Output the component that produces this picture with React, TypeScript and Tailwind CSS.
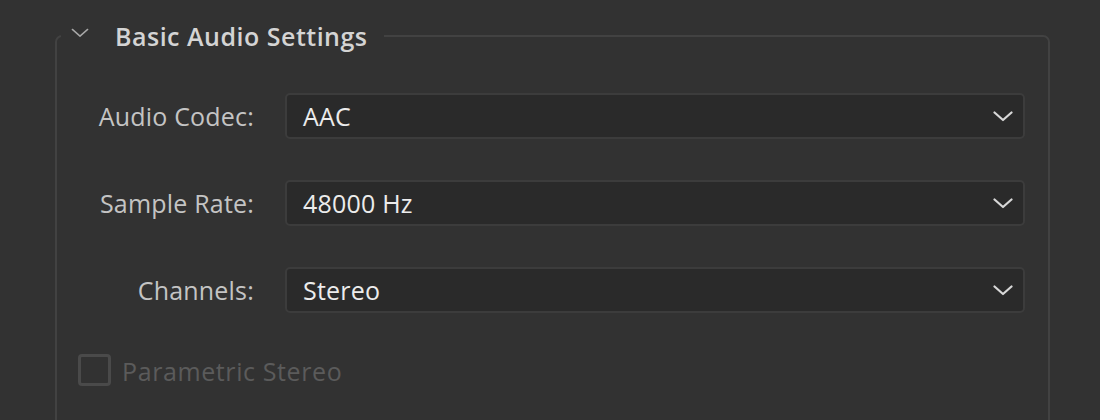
import React from "react";

const Chevron = ({ className }: { className?: string }) => (
  <svg viewBox="0 0 20 11" className={className} fill="none">
    <path d="M1.5 1.5 L10 9 L18.5 1.5" stroke="currentColor" strokeWidth="2.2" strokeLinecap="round" strokeLinejoin="round" />
  </svg>
);

const Select = ({ value }: { value: string }) => (
  <div className="h-[46px] w-[740px] rounded-[5px] border-2 border-[#3c3c3c] bg-[#2a2a2a] flex items-center justify-between pl-[16px] pr-[10px]">
    <span className="text-[#ececec] text-[25px] leading-none tracking-[0.2px]">{value}</span>
    <Chevron className="w-[20px] h-[11px] text-[#d8d8d8]" />
  </div>
);

export default function App() {
  const rows: [string, string][] = [
    ["Audio Codec:", "AAC"],
    ["Sample Rate:", "48000 Hz"],
    ["Channels:", "Stereo"],
  ];
  return (
    <div
      className="w-[1100px] h-[420px] bg-[#323232] overflow-hidden pt-[21px] pl-[55px]"
      style={{ fontFamily: '"Open Sans", "Noto Sans", sans-serif' }}
    >
      <fieldset className="w-[995px] h-[500px] border-2 border-[#424242] rounded-[7px] pl-0 pr-[22px]">
        <legend className="h-[30px] ml-[4px] pl-[10px] pr-[16px] flex items-center">
          <svg viewBox="0 0 20 11" className="w-[18px] h-[10px] text-[#a8a8a8] mr-[26px] -mt-[6px]" fill="none">
            <path d="M1.5 1.5 L10 9 L18.5 1.5" stroke="currentColor" strokeWidth="1.6" strokeLinecap="round" strokeLinejoin="round" />
          </svg>
          <span className="text-[25px] font-semibold text-[#d4d4d4] leading-none tracking-[0.5px]">Basic Audio Settings</span>
        </legend>
        <div className="pt-[42px] grid grid-cols-[197px_740px] gap-x-[31px] gap-y-[41px] items-center">
          {rows.map(([label, value]) => (
            <React.Fragment key={label}>
              <div className="text-right text-[25px] text-[#c4c4c4] leading-none tracking-[0.2px]">{label}</div>
              <Select value={value} />
            </React.Fragment>
          ))}
        </div>
        <div className="mt-[41px] ml-[21px] flex items-center">
          <div className="w-[33px] h-[32px] rounded-[4px] border-[3px] border-[#4a4a4a]" />
          <span className="ml-[11px] mt-[3px] text-[25px] text-[#5b5b5b] leading-none tracking-[0.6px]">Parametric Stereo</span>
        </div>
      </fieldset>
    </div>
  );
}
